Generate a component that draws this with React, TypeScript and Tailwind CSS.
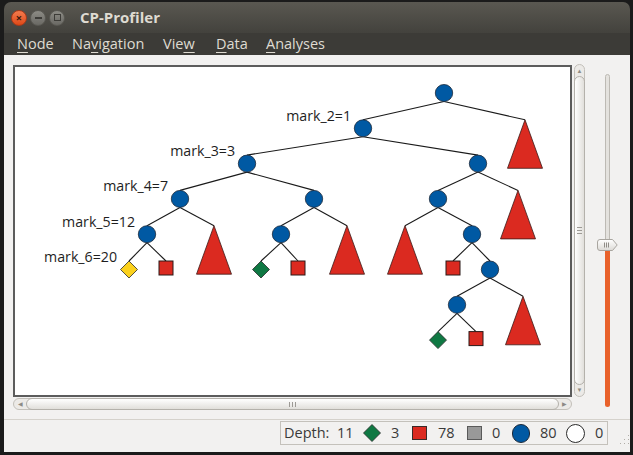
import React from 'react'

type TNode = { t: 'n' | 'T' | 'r' | 'g' | 'y'; x: number; label?: string; kids?: TNode[] }

const tree: TNode = {
  t: 'n', x: 444, kids: [
    {
      t: 'n', x: 363, label: 'mark_2=1', kids: [
        {
          t: 'n', x: 247, label: 'mark_3=3', kids: [
            {
              t: 'n', x: 180, label: 'mark_4=7', kids: [
                { t: 'n', x: 147, label: 'mark_5=12', kids: [{ t: 'y', x: 129, label: 'mark_6=20' }, { t: 'r', x: 166 }] },
                { t: 'T', x: 214 },
              ],
            },
            {
              t: 'n', x: 314, kids: [
                { t: 'n', x: 281, kids: [{ t: 'g', x: 261 }, { t: 'r', x: 298 }] },
                { t: 'T', x: 347 },
              ],
            },
          ],
        },
        {
          t: 'n', x: 478, kids: [
            {
              t: 'n', x: 438, kids: [
                { t: 'T', x: 405 },
                {
                  t: 'n', x: 472, kids: [
                    { t: 'r', x: 453 },
                    {
                      t: 'n', x: 490, kids: [
                        { t: 'n', x: 457, kids: [{ t: 'g', x: 438 }, { t: 'r', x: 476 }] },
                        { t: 'T', x: 523 },
                      ],
                    },
                  ],
                },
              ],
            },
            { t: 'T', x: 518 },
          ],
        },
      ],
    },
    { t: 'T', x: 525 },
  ],
}

const BLUE = '#0059a3'
const RED = '#db2a20'
const GREEN = '#0f7843'
const YELLOW = '#fbd11d'

// top of each depth level
const yt = (d: number) => 84.5 + 35.3 * d

function collect(n: TNode, d: number, edges: React.ReactNode[], shapes: React.ReactNode[], labels: React.ReactNode[]) {
  const top = yt(d)
  const key = `${d}-${n.x}`
  if (n.kids) {
    n.kids.forEach((k) => {
      edges.push(<line key={`e${key}-${k.x}`} x1={n.x} y1={top + 17} x2={k.x} y2={yt(d + 1)} stroke="#1a1a1a" strokeWidth={1.1} />)
      collect(k, d + 1, edges, shapes, labels)
    })
  }
  if (n.t === 'n') {
    shapes.push(<ellipse key={key} cx={n.x} cy={top + 8.5} rx={8.7} ry={8.5} fill={BLUE} stroke="#1d2a3a" strokeWidth={0.8} />)
  } else if (n.t === 'T') {
    shapes.push(<polygon key={key} points={`${n.x},${top} ${n.x + 17.5},${top + 48.5} ${n.x - 17.5},${top + 48.5}`} fill={RED} stroke="#3a1a18" strokeWidth={0.8} />)
  } else if (n.t === 'r') {
    shapes.push(<rect key={key} x={n.x - 7} y={top} width={14} height={14} fill={RED} stroke="#2a1a18" strokeWidth={1} />)
  } else {
    shapes.push(<polygon key={key} points={`${n.x},${top} ${n.x + 8.5},${top + 8.5} ${n.x},${top + 17} ${n.x - 8.5},${top + 8.5}`} fill={n.t === 'g' ? GREEN : YELLOW} stroke="#2a2a2a" strokeWidth={0.8} />)
  }
  if (n.label) {
    labels.push(
      <text key={`l${key}`} x={n.x - 12} y={top + 1} textAnchor="end" fontSize={14.2} fill="#1e1e1e" fontFamily="'Open Sans', sans-serif">
        {n.label}
      </text>
    )
  }
}

function TreeCanvas() {
  const edges: React.ReactNode[] = []
  const shapes: React.ReactNode[] = []
  const labels: React.ReactNode[] = []
  collect(tree, 0, edges, shapes, labels)
  return (
    <svg width={555} height={328} viewBox="15 67 555 328" className="block">
      {edges}
      {shapes}
      {labels}
    </svg>
  )
}

function MenuItem({ w, pre, u, post }: { w: string; pre: string; u: string; post: string }) {
  return (
    <div className={`${w} shrink-0`}>
      {pre}
      <span className="underline underline-offset-[3px] decoration-1">{u}</span>
      {post}
    </div>
  )
}

function VScroll() {
  return (
    <div className="-mt-px flex h-[333px] w-[11px] flex-col items-center rounded-full border border-[#c3c0ba] bg-[#eceae7]">
      <div className="mt-[3px] text-[6px] leading-[6px] text-[#8d8a85]">▲</div>
      <div className="my-[2px] flex w-[11px] flex-1 items-center justify-center rounded-full border border-[#b4b1ab] bg-gradient-to-r from-white to-[#e1dfdb]">
        <div className="flex flex-col gap-[2px]">
          <div className="h-px w-[5px] bg-[#9d9a95]" />
          <div className="h-px w-[5px] bg-[#9d9a95]" />
          <div className="h-px w-[5px] bg-[#9d9a95]" />
        </div>
      </div>
      <div className="mb-[3px] text-[6px] leading-[6px] text-[#8d8a85]">▼</div>
    </div>
  )
}

function HScroll() {
  return (
    <div className="mt-px flex h-[12px] w-[559px] items-center rounded-full border border-[#c3c0ba] bg-[#eceae7]">
      <div className="ml-[4px] text-[6px] leading-[6px] text-[#8d8a85]">◀</div>
      <div className="mx-[3px] flex h-[12px] flex-1 items-center justify-center rounded-full border border-[#b4b1ab] bg-gradient-to-b from-white to-[#e1dfdb]">
        <div className="flex gap-[2px]">
          <div className="h-[5px] w-px bg-[#9d9a95]" />
          <div className="h-[5px] w-px bg-[#9d9a95]" />
          <div className="h-[5px] w-px bg-[#9d9a95]" />
        </div>
      </div>
      <div className="mr-[4px] text-[6px] leading-[6px] text-[#8d8a85]">▶</div>
    </div>
  )
}

function ZoomSlider() {
  return (
    <div className="relative ml-[12px] mt-[9px] flex h-[333px] w-[20px] flex-col items-center">
      <div className="h-[168px] w-[5px] rounded-t-full border border-[#bdbab4] bg-[#e4e2de]" />
      <div className="h-[165px] w-[5px] rounded-b-full bg-[#e9622b]" />
      <svg className="absolute left-0 top-[165px]" width={21} height={12} viewBox="0 0 21 12">
        <defs>
          <linearGradient id="hg" x1="0" y1="0" x2="0" y2="1">
            <stop offset="0" stopColor="#ffffff" />
            <stop offset="1" stopColor="#dcdad6" />
          </linearGradient>
        </defs>
        <path d="M3 0.5 H15.5 L20.2 6 L15.5 11.5 H3 Q0.5 11.5 0.5 9 V3 Q0.5 0.5 3 0.5 Z" fill="url(#hg)" stroke="#a9a6a0" />
        <line x1="7.5" y1="3.5" x2="7.5" y2="8.5" stroke="#8f8c87" />
        <line x1="9.5" y1="3.5" x2="9.5" y2="8.5" stroke="#8f8c87" />
        <line x1="11.5" y1="3.5" x2="11.5" y2="8.5" stroke="#8f8c87" />
      </svg>
    </div>
  )
}

function StatusBar() {
  return (
    <div className="ml-[276px] mt-px flex h-[24px] w-[328px] items-center border border-[#c4c1bb] pl-[3px] text-[14.5px] text-[#3a3a3a]">
      <span className="w-[53px] shrink-0">Depth:</span>
      <span className="w-[26px] shrink-0">11</span>
      <svg width={18} height={18} viewBox="0 0 18 18" className="shrink-0">
        <polygon points="9,0.5 17.5,9 9,17.5 0.5,9" fill={GREEN} stroke="#2a2a2a" strokeWidth={0.8} />
      </svg>
      <span className="ml-[10px] w-[21px] shrink-0">3</span>
      <div className="h-[14px] w-[15px] shrink-0 border border-[#3a2a28] bg-[#db2a20]" />
      <span className="ml-[11px] w-[29px] shrink-0">78</span>
      <div className="h-[14px] w-[15px] shrink-0 border border-[#5a5a5a] bg-[#999999]" />
      <span className="ml-[10px] w-[20px] shrink-0">0</span>
      <div className="h-[19px] w-[18px] shrink-0 rounded-full border border-[#1d2a3a] bg-[#0059a3]" />
      <span className="ml-[10px] w-[26px] shrink-0">80</span>
      <div className="h-[19px] w-[19px] shrink-0 rounded-full border border-[#2a2a2a] bg-white" />
      <span className="ml-[10px] shrink-0">0</span>
    </div>
  )
}

export default function App() {
  return (
    <div className="h-[455px] w-[633px] overflow-hidden bg-[#1b1b1b] pl-[4px] pr-[3px] pt-[2px] pb-[3px] font-['Open_Sans',sans-serif]">
      <div className="flex h-full flex-col">
        <div className="flex h-[31px] items-center rounded-t-[7px] bg-gradient-to-b from-[#5a5851] to-[#43423d] pl-[7px]">
          <div className="flex h-[16px] w-[16px] items-center justify-center rounded-full border border-[#a8391a] bg-gradient-to-b from-[#f47a4c] to-[#dd4814] text-[11px] font-bold leading-none text-[#3a1a0e]">
            ×
          </div>
          <div className="ml-[3px] flex h-[16px] w-[16px] items-center justify-center rounded-full border border-[#5a5953] bg-gradient-to-b from-[#8c8b85] to-[#6a6964]">
            <div className="h-[2px] w-[7px] bg-[#3d3c38]" />
          </div>
          <div className="ml-[3px] flex h-[16px] w-[16px] items-center justify-center rounded-full border border-[#5a5953] bg-gradient-to-b from-[#8c8b85] to-[#6a6964]">
            <div className="h-[7px] w-[7px] border-[1.5px] border-[#3d3c38]" />
          </div>
          <div className="ml-[15px] text-[15px] font-bold text-[#dfdbd2]">CP-Profiler</div>
        </div>
        <div className="flex h-[22px] items-center bg-[#3c3b37] pl-[13px] text-[14.5px] text-[#dfdbd2]">
          <MenuItem w="w-[55px]" pre="" u="N" post="ode" />
          <MenuItem w="w-[91px]" pre="Na" u="v" post="igation" />
          <MenuItem w="w-[53px]" pre="Vie" u="w" post="" />
          <MenuItem w="w-[50px]" pre="" u="D" post="ata" />
          <MenuItem w="w-[80px]" pre="" u="A" post="nalyses" />
        </div>
        <div className="flex flex-1 flex-col bg-[#f2f1f0]">
          <div className="flex pl-[9px] pt-[10px]">
            <div className="flex flex-col">
              <div className="h-[332px] w-[559px] border-2 border-[#5c5c5c] bg-white">
                <TreeCanvas />
              </div>
              <HScroll />
            </div>
            <div className="ml-[2px]">
              <VScroll />
            </div>
            <ZoomSlider />
          </div>
          <div className="mt-[9px] h-px bg-[#d5d2cc]" />
          <div className="flex items-end">
            <StatusBar />
            <svg width={12} height={12} viewBox="0 0 12 12" className="ml-[10px] mt-[13px]">
              {[[10, 2], [10, 6], [6, 6], [10, 10], [6, 10], [2, 10]].map(([cx, cy]) => (
                <rect key={`${cx}-${cy}`} x={cx} y={cy} width={1} height={1} fill="#b0ada7" />
              ))}
            </svg>
          </div>
        </div>
      </div>
    </div>
  )
}
